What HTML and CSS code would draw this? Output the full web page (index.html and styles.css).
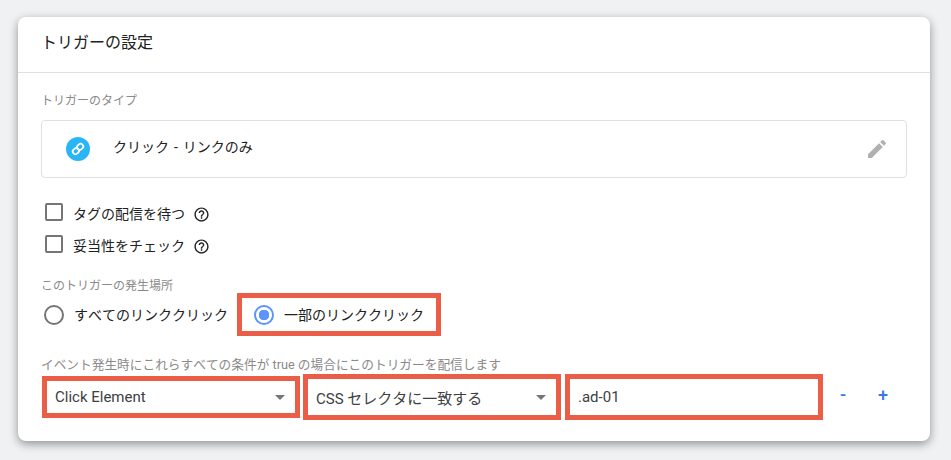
FILE: index.html
```html
<!DOCTYPE html>
<html lang="ja">
<head>
<meta charset="utf-8">
<title>トリガーの設定</title>
<link rel="stylesheet" href="styles.css">
</head>
<body>
<section class="card">
  <header class="card-header">トリガーの設定</header>
  <div class="card-body">
    <div class="label">トリガーのタイプ</div>
    <div class="type-box">
      <span class="type-icon">
        <svg width="16" height="16" viewBox="0 0 24 24" fill="none" stroke="#fff" stroke-width="2.6" stroke-linecap="round"><g transform="rotate(-45 12 12)"><rect x="2.5" y="8" width="10" height="8" rx="4"/><rect x="11.5" y="8" width="10" height="8" rx="4"/></g></svg>
      </span>
      <span class="type-name">クリック - リンクのみ</span>
      <svg class="edit-icon" width="24" height="24" viewBox="0 0 24 24" fill="#b0b0b0"><path d="M3 17.25V21h3.75L17.81 9.94l-3.75-3.75L3 17.25zM20.71 7.04a1 1 0 0 0 0-1.41l-2.34-2.34a1 1 0 0 0-1.41 0l-1.83 1.83 3.75 3.75 1.83-1.83z"/></svg>
    </div>
    <div class="check-row">
      <span class="checkbox"></span><span class="check-text">タグの配信を待つ</span>
      <svg class="help" width="17" height="17" viewBox="0 0 24 24" fill="#212121"><path d="M11 18h2v-2h-2v2zm1-16C6.48 2 2 6.48 2 12s4.48 10 10 10 10-4.48 10-10S17.52 2 12 2zm0 18c-4.41 0-8-3.59-8-8s3.59-8 8-8 8 3.59 8 8-3.59 8-8 8zm0-14c-2.21 0-4 1.79-4 4h2c0-1.1.9-2 2-2s2 .9 2 2c0 2-3 1.75-3 5h2c0-2.25 3-2.5 3-5 0-2.21-1.79-4-4-4z"/></svg>
    </div>
    <div class="check-row">
      <span class="checkbox"></span><span class="check-text">妥当性をチェック</span>
      <svg class="help" width="17" height="17" viewBox="0 0 24 24" fill="#212121"><path d="M11 18h2v-2h-2v2zm1-16C6.48 2 2 6.48 2 12s4.48 10 10 10 10-4.48 10-10S17.52 2 12 2zm0 18c-4.41 0-8-3.59-8-8s3.59-8 8-8 8 3.59 8 8-3.59 8-8 8zm0-14c-2.21 0-4 1.79-4 4h2c0-1.1.9-2 2-2s2 .9 2 2c0 2-3 1.75-3 5h2c0-2.25 3-2.5 3-5 0-2.21-1.79-4-4-4z"/></svg>
    </div>
    <div class="label label-where">このトリガーの発生場所</div>
    <div class="radio-row">
      <span class="radio-option"><span class="radio"></span><span class="radio-text">すべてのリンククリック</span></span>
      <span class="radio-option radio-marked"><span class="radio radio-on"></span><span class="radio-text">一部のリンククリック</span></span>
    </div>
    <div class="label label-cond">イベント発生時にこれらすべての条件が true の場合にこのトリガーを配信します</div>
    <div class="cond-row">
      <div class="field field-first">Click Element<span class="arrow"></span></div>
      <div class="field">CSS セレクタに一致する<span class="arrow"></span></div>
      <div class="field field-last">.ad-01</div>
      <span class="op">-</span>
      <span class="op">+</span>
    </div>
  </div>
</section>
</body>
</html>
```
FILE: styles.css
```css
* { box-sizing: border-box; }
html, body { height: 100%; }
body {
  margin: 0;
  padding: 17px 21px 19px 18px;
  background: #f0f1f3;
  font-family: Roboto, "Noto Sans CJK JP", sans-serif;
  font-kerning: none;
  color: #212121;
  overflow: hidden;
}
.card {
  width: 912px;
  height: 424px;
  background: #fff;
  border-radius: 8px;
  box-shadow: 0 3px 10px rgba(0,0,0,.4);
}
.card-header {
  height: 56px;
  padding: 15px 23px 0;
  font-size: 16px;
  line-height: 22px;
  border-bottom: 1px solid #e0e0e0;
}
.card-body { padding: 19px 23px 0; }
.label {
  font-size: 12px;
  line-height: 18px;
  color: #8a8a8a;
}
.type-box {
  display: flex;
  align-items: center;
  height: 58px;
  margin-top: 10px;
  padding: 0 17px 0 24px;
  border: 1px solid #e0e0e0;
  border-radius: 4px;
}
.type-icon {
  display: flex;
  align-items: center;
  justify-content: center;
  width: 24px;
  height: 24px;
  border-radius: 50%;
  background: #29b6f6;
}
.type-name {
  flex: 1;
  margin-left: 23px;
  padding-bottom: 7px;
  font-size: 14px;
  word-spacing: 1.5px;
}
.check-row {
  display: flex;
  align-items: center;
  height: 32px;
  padding-left: 4px;
  font-size: 14px;
}
.type-box + .check-row { margin-top: 19px; }
.checkbox {
  width: 18px;
  height: 18px;
  margin-bottom: 2px;
  border: 2px solid #757575;
  border-radius: 2px;
}
.check-text { margin-left: 10px; }
.help { margin-left: 8px; margin-top: 3px; }
.label-where { margin-top: 18px; line-height: 14px; }
.radio-row {
  display: flex;
  align-items: center;
  height: 43px;
  font-size: 14px;
}
.radio-option { display: flex; align-items: center; }
.radio-text { padding-bottom: 2px; }
.radio {
  width: 20px;
  height: 20px;
  margin-right: 10px;
  margin-left: 3px;
  border: 2px solid #757575;
  border-radius: 50%;
}
.radio-marked {
  height: 43px;
  width: 204px;
  margin-left: 9px;
  padding-left: 12px;
  border: 5px solid #ea5e47;
}
.radio-on {
  margin-left: 0;
  border-color: #5b95f9;
  background: radial-gradient(circle, #5b95f9 0 5px, #fff 5.5px);
}
.label-cond { margin-top: 20px; font-size: 12.7px; }
.cond-row {
  display: flex;
  align-items: center;
  height: 46px;
  font-size: 15px;
  color: #3c4043;
}
.field {
  display: flex;
  align-items: center;
  justify-content: space-between;
  width: 258px;
  height: 46px;
  margin-right: 4px;
  padding: 0 10px 0 8px;
  border: 5px solid #ea5e47;
}
.field-first { height: 42px; margin-left: 1px; margin-right: 3px; }
.field-last { margin-right: 0; }
.arrow {
  width: 0;
  height: 0;
  border-left: 5px solid transparent;
  border-right: 5px solid transparent;
  border-top: 5px solid #757575;
}
.op {
  width: 40px;
  padding-bottom: 5px;
  text-align: center;
  font-size: 18px;
  font-weight: 500;
  color: #3b78e7;
}
```
